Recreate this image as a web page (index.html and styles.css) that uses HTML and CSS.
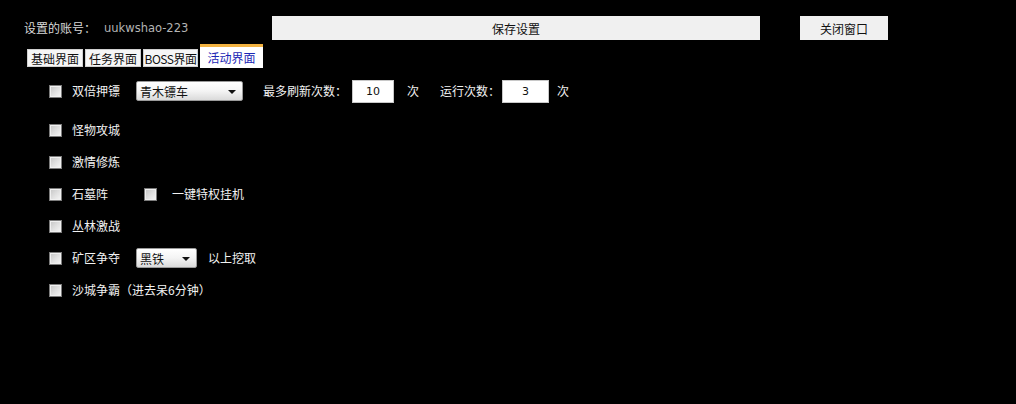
FILE: index.html
```html
<!DOCTYPE html>
<html lang="zh-CN">
<head>
<meta charset="utf-8">
<title>活动界面</title>
<link rel="stylesheet" href="styles.css">
</head>
<body>
<div class="page">
  <div class="header">
    <span class="acc-label">设置的账号：</span>
    <span class="acc-name">uukwshao-223</span>
    <button class="btn btn-save">保存设置</button>
    <button class="btn btn-close">关闭窗口</button>
  </div>
  <div class="tabs">
    <span class="tab">基础界面</span>
    <span class="tab">任务界面</span>
    <span class="tab tab-boss">BOSS界面</span>
    <span class="tab tab-active">活动界面</span>
  </div>
  <div class="content">
    <div class="row row-first">
      <span class="cb"></span>
      <span class="lbl">双倍押镖</span>
      <span class="sel sel-wide">青木镖车<span class="arrow"></span></span>
      <span class="txt txt-max">最多刷新次数：</span>
      <span class="num num-max">10</span>
      <span class="txt txt-unit">次</span>
      <span class="txt txt-run">运行次数：</span>
      <span class="num num-run">3</span>
      <span class="txt txt-unit2">次</span>
    </div>
    <div class="row">
      <span class="cb"></span>
      <span class="lbl">怪物攻城</span>
    </div>
    <div class="row">
      <span class="cb"></span>
      <span class="lbl">激情修炼</span>
    </div>
    <div class="row">
      <span class="cb"></span>
      <span class="lbl">石墓阵</span>
      <span class="cb cb-second"></span>
      <span class="lbl lbl-second">一键特权挂机</span>
    </div>
    <div class="row">
      <span class="cb"></span>
      <span class="lbl">丛林激战</span>
    </div>
    <div class="row">
      <span class="cb"></span>
      <span class="lbl">矿区争夺</span>
      <span class="sel sel-narrow">黑铁<span class="arrow"></span></span>
      <span class="txt txt-after">以上挖取</span>
    </div>
    <div class="row">
      <span class="cb"></span>
      <span class="lbl lbl-free">沙城争霸（进去呆6分钟）</span>
    </div>
  </div>
</div>
</body>
</html>
```
FILE: styles.css
```css
* { box-sizing: border-box; }
html, body {
  margin: 0;
  padding: 0;
  background: #000;
}
body {
  width: 1016px;
  height: 404px;
  overflow: hidden;
  font-family: "Noto Sans CJK SC", "DejaVu Sans", sans-serif;
  font-size: 12px;
  color: #f2f2f2;
}
.page {
  padding-top: 16px;
}
.header {
  display: flex;
  align-items: center;
  height: 24px;
  padding-left: 24px;
}
.acc-label {
  color: #d8d8d8;
  width: 80px;
  line-height: 24px;
}
.acc-name {
  color: #b4b4b4;
  font-family: "DejaVu Sans", sans-serif;
  font-size: 11.5px;
  width: 168px;
}
.btn {
  height: 24px;
  border: none;
  background: #f0f0f0;
  color: #111;
  font-family: "Noto Sans CJK SC", sans-serif;
  font-size: 12px;
  padding: 0;
  margin: 0;
}
.btn-save {
  width: 488px;
}
.btn-close {
  width: 88px;
  margin-left: 40px;
}
.tabs {
  display: flex;
  align-items: flex-end;
  gap: 2px;
  padding-left: 27px;
  margin-top: 4px;
  height: 24px;
}
.tab {
  display: flex;
  align-items: center;
  justify-content: center;
  height: 18px;
  width: 56px;
  background: #f6f6f6;
  border: 1px solid #d0d0d0;
  color: #111;
  font-size: 12px;
  margin-bottom: 1px;
}
.tab-boss {
  width: 55px;
  letter-spacing: -0.5px;
}
.tab-active {
  width: 63px;
  height: 24px;
  margin-bottom: 0;
  background: #fff;
  border: none;
  border-top: 3px solid #f2b240;
  color: #1b27b5;
}
.content {
  padding-left: 49px;
  margin-top: 11px;
}
.row {
  display: flex;
  align-items: center;
  height: 32px;
}
.row-first {
  height: 24px;
  margin-bottom: 11px;
}
.cb {
  width: 13px;
  height: 13px;
  border: 1px solid #7c7c7c;
  background: linear-gradient(135deg, #c4c4c4 0%, #e2e2e2 55%, #f6f6f6 100%);
  box-shadow: inset 0 0 0 1px #f0f0f0;
  flex: none;
}
.lbl {
  margin-left: 10px;
  width: 64px;
  flex: none;
  line-height: 16px;
}
.lbl-free {
  width: auto;
}
.cb-second {
  margin-left: 8px;
}
.lbl-second {
  margin-left: 15px;
  width: auto;
}
.sel {
  position: relative;
  display: flex;
  align-items: center;
  height: 20px;
  padding-left: 3px;
  border: 1px solid #9a9a9a;
  border-radius: 2px;
  background: linear-gradient(#ffffff 0%, #f4f4f4 50%, #dadada 100%);
  color: #111;
  font-size: 12px;
  flex: none;
}
.sel-wide {
  width: 107px;
}
.sel-narrow {
  width: 61px;
  height: 20px;
}
.arrow {
  position: absolute;
  right: 6px;
  top: 8px;
  width: 0;
  height: 0;
  border-left: 4px solid transparent;
  border-right: 4px solid transparent;
  border-top: 4px solid #111;
}
.txt {
  flex: none;
  line-height: 16px;
}
.txt-max {
  margin-left: 20px;
  width: 89px;
}
.txt-unit {
  margin-left: 13px;
}
.txt-unit2 {
  margin-left: 8px;
}
.txt-run {
  margin-left: 21px;
  width: 62px;
}
.txt-after {
  margin-left: 11px;
}
.num {
  display: flex;
  align-items: center;
  justify-content: center;
  height: 23px;
  background: #fff;
  border: 1px solid #c8c8c8;
  color: #111;
  font-family: "DejaVu Sans", sans-serif;
  font-size: 11px;
  flex: none;
}
.num-max {
  width: 42px;
}
.num-run {
  width: 47px;
}
```
